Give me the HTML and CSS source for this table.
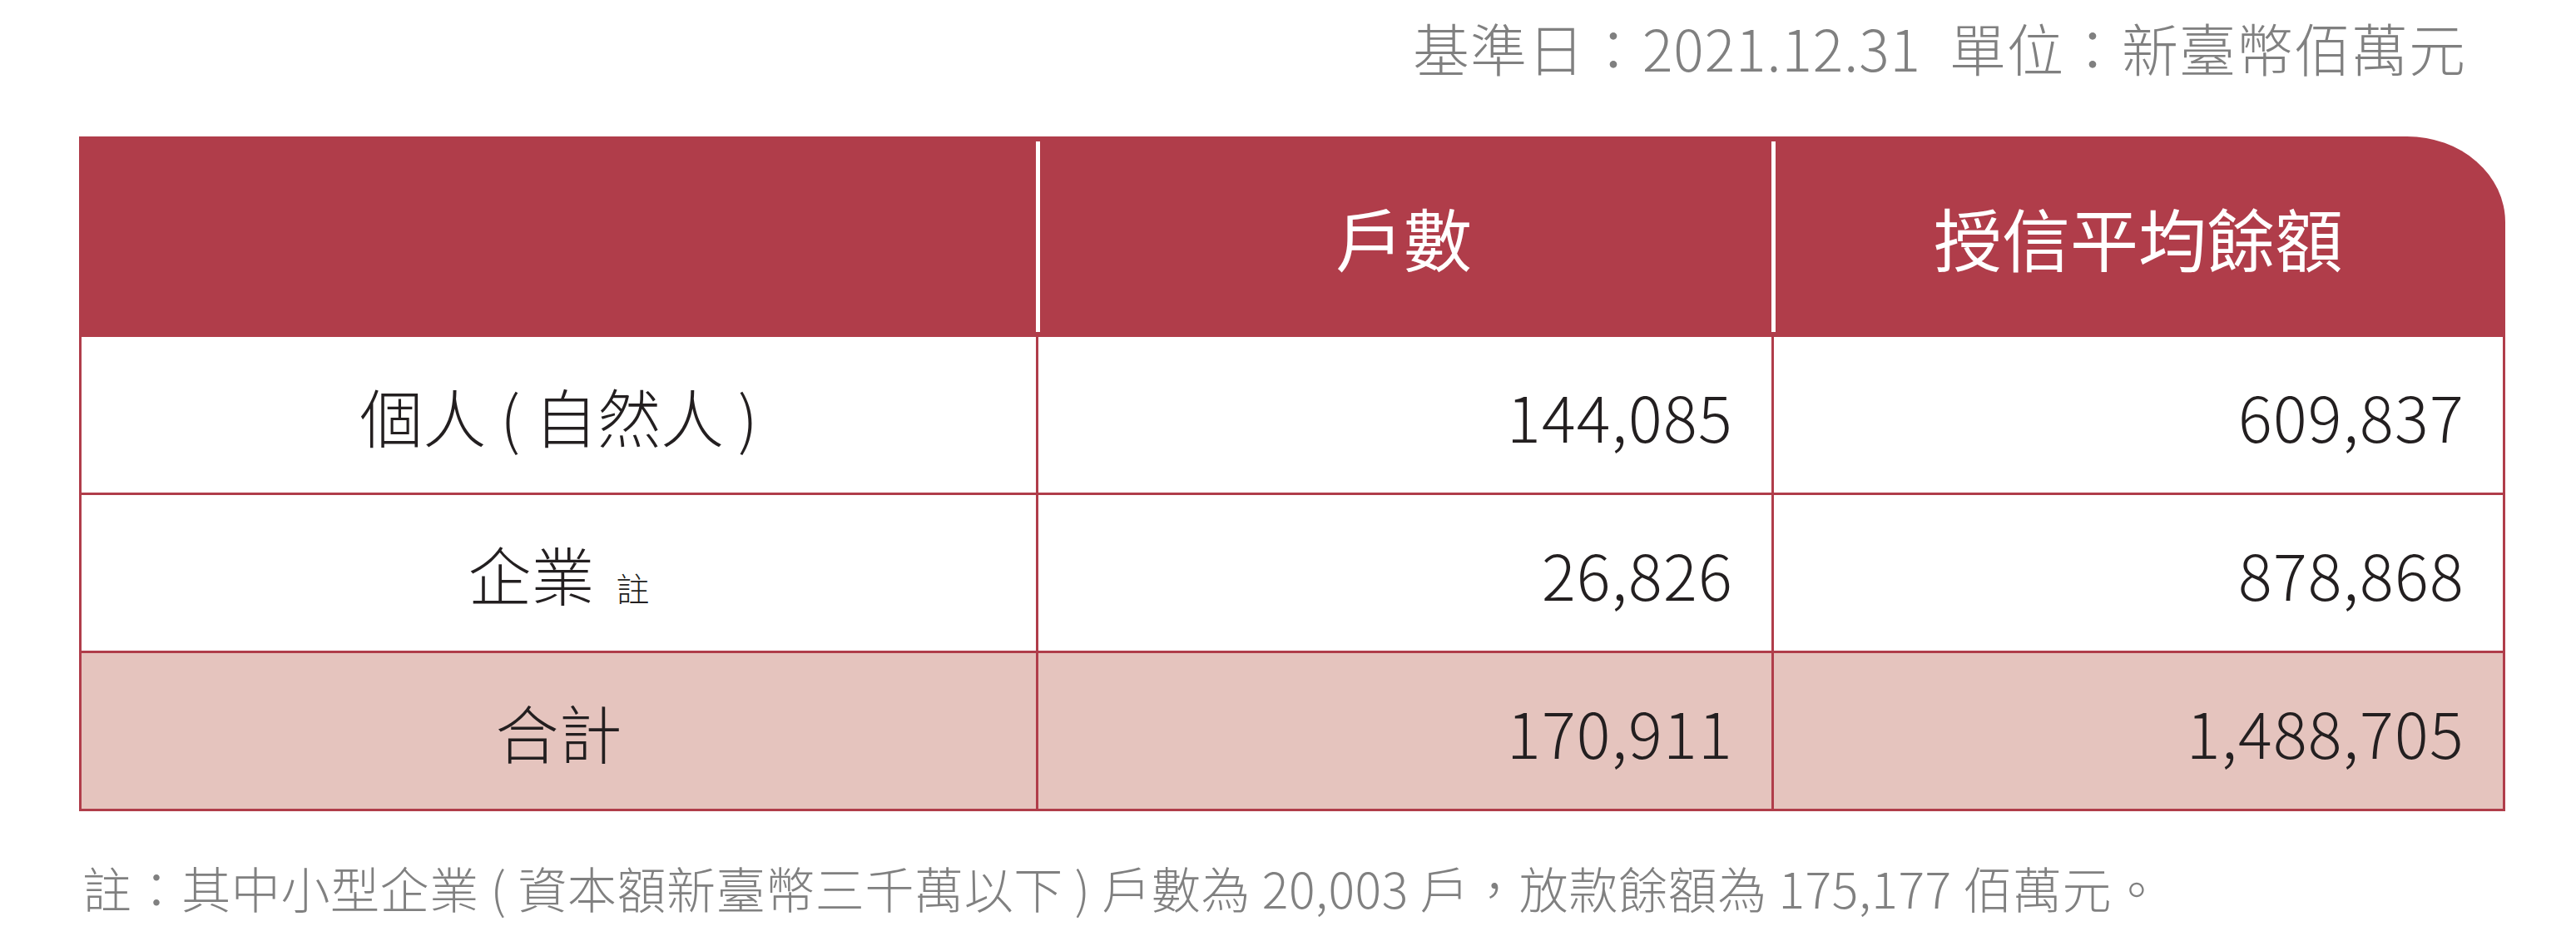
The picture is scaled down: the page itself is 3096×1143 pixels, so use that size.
FILE: index.html
```html
<!DOCTYPE html>
<html lang="zh-Hant">
<head>
<meta charset="utf-8">
<title>授信戶數</title>
<link rel="stylesheet" href="styles.css">
</head>
<body>
<div class="page">
  <div class="meta">基準日：2021.12.31<span class="gap"></span>單位：新臺幣佰萬元</div>
  <div class="table">
    <div class="head">
      <div class="hcell"></div>
      <div class="hcell">戶數</div>
      <div class="hcell">授信平均餘額</div>
    </div>
    <div class="row">
      <div class="cell label">個人 ( 自然人 )</div>
      <div class="cell num">144,085</div>
      <div class="cell num">609,837</div>
    </div>
    <div class="row">
      <div class="cell label">企業<span class="note">註</span></div>
      <div class="cell num">26,826</div>
      <div class="cell num">878,868</div>
    </div>
    <div class="row total">
      <div class="cell label">合計</div>
      <div class="cell num">170,911</div>
      <div class="cell num">1,488,705</div>
    </div>
  </div>
  <div class="foot">註：其中小型企業 ( 資本額新臺幣三千萬以下 ) 戶數為 20,003 戶，放款餘額為 175,177 佰萬元。</div>
</div>
</body>
</html>
```

FILE: styles.css
```css
html, body {
  margin: 0;
  padding: 0;
  background: #ffffff;
}
.page {
  width: 3096px;
  font-family: "Noto Sans CJK TC", "Noto Sans", sans-serif;
}
.meta {
  text-align: right;
  padding-right: 132px;
  font-size: 68px;
  letter-spacing: 1px;
  line-height: 114px;
  height: 114px;
  color: #808080;
  font-weight: 300;
}
.gap {
  display: inline-block;
  width: 34px;
}
.table {
  margin-top: 50px;
  margin-left: 95px;
  width: 2916px;
}
.head {
  display: grid;
  grid-template-columns: 1150px 884px 882px;
  height: 241px;
  background: #b03d4a;
  border-top-right-radius: 118px 103px;
}
.hcell {
  display: flex;
  align-items: center;
  justify-content: center;
  color: #ffffff;
  font-size: 82px;
  font-weight: 400;
}
.hcell + .hcell {
  background: linear-gradient(#ffffff, #ffffff) left center / 5px calc(100% - 12px) no-repeat;
}
.row {
  display: grid;
  grid-template-columns: 1150px 884px 882px;
  height: 190px;
  box-sizing: border-box;
  border-bottom: 3px solid #b03d4a;
}
.total {
  background: #e5c4be;
}
.cell {
  display: flex;
  align-items: center;
  border-left: 3px solid #b03d4a;
  box-sizing: border-box;
  color: #231f20;
  font-size: 76px;
  font-weight: 300;
}
.cell:last-child {
  border-right: 3px solid #b03d4a;
}
.label {
  justify-content: center;
}
.num {
  justify-content: flex-end;
  padding-right: 46px;
  letter-spacing: 1.3px;
}
.note {
  font-size: 40px;
  margin-left: 26px;
  align-self: center;
  padding-top: 34px;
}
.foot {
  margin-top: 42px;
  margin-left: 99px;
  font-size: 59px;
  letter-spacing: 0.6px;
  line-height: 100px;
  color: #808080;
  font-weight: 300;
}
```
